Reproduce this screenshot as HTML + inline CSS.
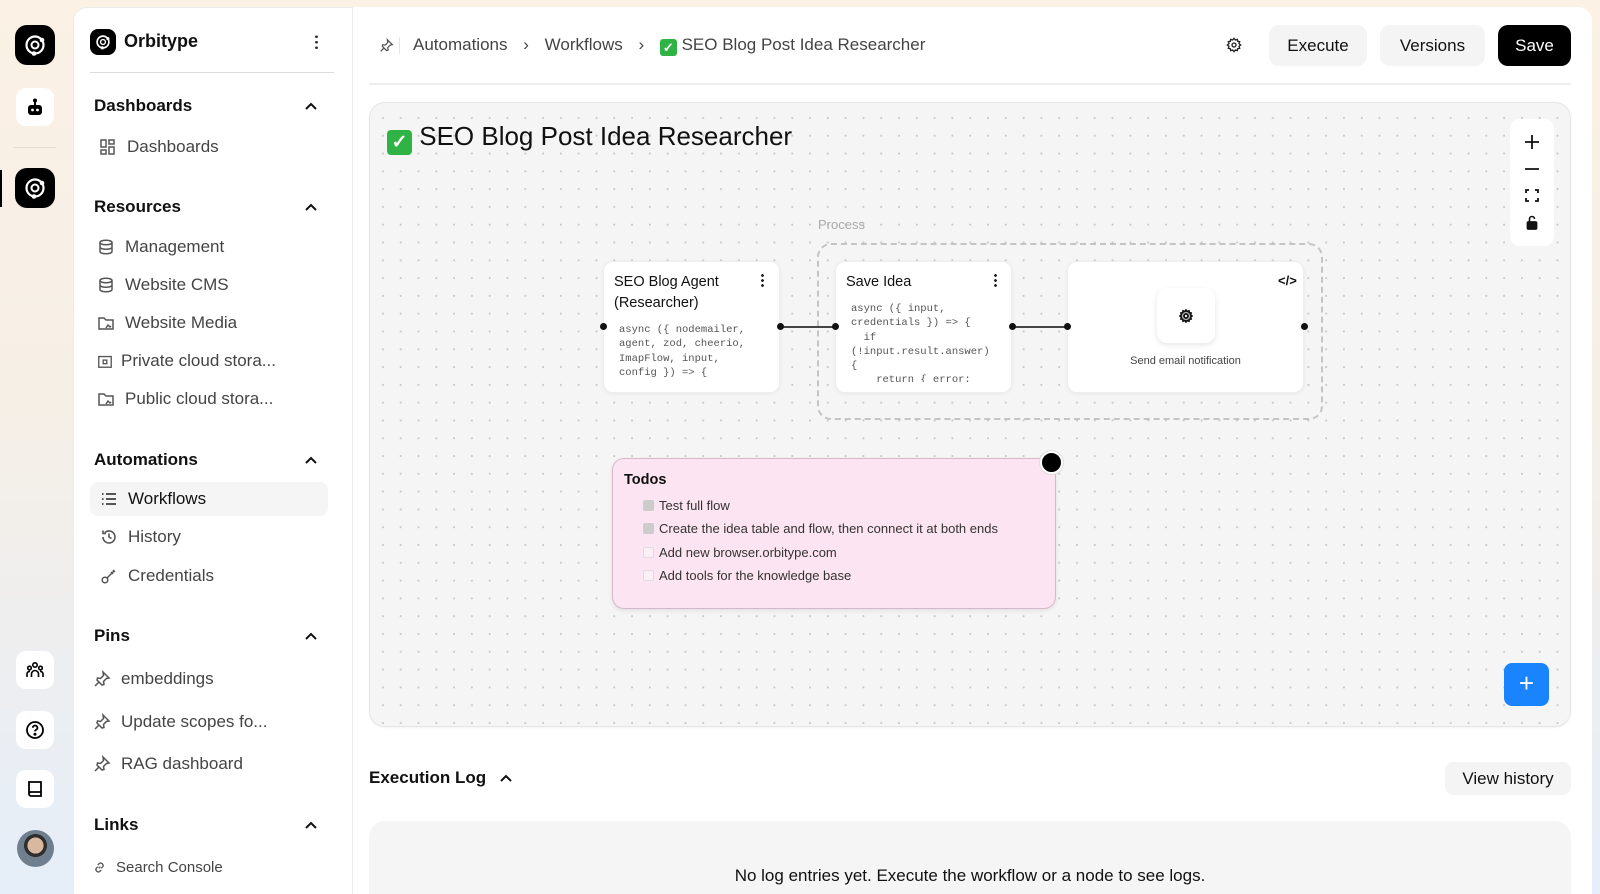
<!DOCTYPE html>
<html style="overflow:hidden;height:894px"><head><meta charset="utf-8"><style>
*{box-sizing:border-box;margin:0;padding:0}
body{width:1600px;height:894px;overflow:hidden;font-family:"Liberation Sans",sans-serif;background:linear-gradient(180deg,#fbf1e5 0%,#f6efe6 45%,#e5eef9 100%);position:relative;color:#111}
.abs{position:absolute}
.rail{position:absolute;left:16px;width:38px;height:38px;border-radius:10px;background:#fff;display:flex;align-items:center;justify-content:center}
.side{position:absolute;left:73px;top:7px;width:290px;height:887px;background:#fff;border-radius:14px 0 0 0;border:1px solid #ececec;border-bottom:none}
.main{position:absolute;left:352px;top:7px;width:1240px;height:887px;background:#fff;border-radius:0 14px 0 0;border-left:1px solid #ececec}
.h{position:absolute;left:94px;font-size:17px;font-weight:bold;color:#111}
.chev{position:absolute;left:304px;width:14px;height:10px}
.it{position:absolute;font-size:17px;color:#444;display:flex;align-items:center;gap:10px;height:24px}
.it svg{width:18px;height:18px}
.btn{position:absolute;top:25px;height:41px;border-radius:10px;background:#f4f4f4;font-size:17px;display:flex;align-items:center;justify-content:center;color:#111}
.node{position:absolute;background:#fff;border-radius:10px;box-shadow:0 1px 3px rgba(0,0,0,.06);border:1px solid #eee}
.code{font-family:"Liberation Mono",monospace;font-size:10.5px;color:#555;line-height:14.3px;white-space:pre}
.dot{position:absolute;width:7px;height:7px;border-radius:50%;background:#111}
.cb{display:inline-block;width:11px;height:11px;border:1px solid #ddd;border-radius:2px;background:#f8f0f4;margin-right:5px;vertical-align:-1px}
.cb.on{background:#ccc;border-color:#ccc}
</style></head><body>
<!-- rail -->
<div class="rail" style="top:25px;width:40px;height:40px;left:15px;background:#000;border-radius:12px"><svg width="26" height="26" viewBox="0 0 26 26"><circle cx="13" cy="13" r="8.5" fill="none" stroke="#fff" stroke-width="2.2"/><circle cx="13" cy="13" r="3.5" fill="none" stroke="#fff" stroke-width="2"/><circle cx="20" cy="8" r="2.3" fill="#fff"/><circle cx="12" cy="21.5" r="2.3" fill="#fff"/></svg></div>
<div class="rail" style="top:88px"><svg width="20" height="20" viewBox="0 0 20 20"><circle cx="10" cy="3.5" r="2" fill="#000"/><rect x="9" y="4" width="2" height="4" fill="#000"/><rect x="3" y="8" width="14" height="10" rx="3" fill="#000"/><circle cx="7.5" cy="13" r="1.4" fill="#fff"/><circle cx="12.5" cy="13" r="1.4" fill="#fff"/></svg></div>
<div class="abs" style="left:14px;top:147px;width:42px;height:1px;background:#e3ddd4"></div>
<div class="abs" style="left:0;top:170px;width:2px;height:37px;background:#000"></div>
<div class="rail" style="top:168px;width:40px;height:40px;left:15px;background:#000;border-radius:12px"><svg width="26" height="26" viewBox="0 0 26 26"><circle cx="13" cy="13" r="8.5" fill="none" stroke="#fff" stroke-width="2.2"/><circle cx="13" cy="13" r="3.5" fill="none" stroke="#fff" stroke-width="2"/><circle cx="20" cy="8" r="2.3" fill="#fff"/><circle cx="12" cy="21.5" r="2.3" fill="#fff"/></svg></div>
<div class="rail" style="top:651px"><svg width="20" height="20" viewBox="0 0 20 20" fill="none" stroke="#000" stroke-width="1.6"><circle cx="10" cy="5" r="2.2"/><circle cx="4.5" cy="8" r="1.8"/><circle cx="15.5" cy="8" r="1.8"/><path d="M6.5 17v-3a3.5 3.5 0 0 1 7 0v3M2 17v-3a2.5 2.5 0 0 1 3-2.5M18 17v-3a2.5 2.5 0 0 0-3-2.5"/></svg></div>
<div class="rail" style="top:711px"><svg width="20" height="20" viewBox="0 0 20 20" fill="none" stroke="#000" stroke-width="1.8"><circle cx="10" cy="10" r="8"/><path d="M7.8 7.8a2.3 2.3 0 1 1 3 2.2c-.6.3-.8.7-.8 1.4"/><circle cx="10" cy="14.3" r=".6" fill="#000"/></svg></div>
<div class="rail" style="top:770px"><svg width="20" height="20" viewBox="0 0 20 20" fill="none" stroke="#000" stroke-width="1.8"><path d="M4 3h12v14H6a2 2 0 0 1-2-2zM4 14.5a2 2 0 0 1 2-1.5h10"/></svg></div>
<div class="abs" style="left:17px;top:830px;width:37px;height:37px;border-radius:50%;background:radial-gradient(circle at 50% 42%,#d9b8a0 0 28%,#2e2e2e 29% 40%,#6f7f8e 41%)"></div>

<!-- sidebar -->
<div class="side"></div>
<div class="abs" style="left:90px;top:29px;width:26px;height:26px;background:#000;border-radius:8px;display:flex;align-items:center;justify-content:center"><svg width="18" height="18" viewBox="0 0 26 26"><circle cx="13" cy="13" r="8.5" fill="none" stroke="#fff" stroke-width="2.4"/><circle cx="13" cy="13" r="3.5" fill="none" stroke="#fff" stroke-width="2"/><circle cx="20" cy="8" r="2.3" fill="#fff"/><circle cx="12" cy="21.5" r="2.3" fill="#fff"/></svg></div>
<div class="abs" style="left:124px;top:31px;font-size:18px;font-weight:bold">Orbitype</div>
<div class="abs" style="left:315px;top:34px;width:3px;height:16px;background:radial-gradient(circle,#333 1.3px,transparent 1.5px) 0 0/3px 5.5px"></div>
<div class="abs" style="left:90px;top:72px;width:244px;height:1px;background:#ddd"></div>

<svg width="0" height="0" style="position:absolute"><defs><symbol id="ch" viewBox="0 0 14 10"><path d="M2 8l5-5 5 5" fill="none" stroke="#111" stroke-width="2"/></symbol><symbol id="db" viewBox="0 0 18 18"><g fill="none" stroke="#555" stroke-width="1.5"><ellipse cx="9" cy="4.5" rx="6" ry="2.3"/><path d="M3 4.5v9c0 1.3 2.7 2.3 6 2.3s6-1 6-2.3v-9M3 9c0 1.3 2.7 2.3 6 2.3s6-1 6-2.3"/></g></symbol><symbol id="fo" viewBox="0 0 18 18"><g fill="none" stroke="#555" stroke-width="1.5"><path d="M2 15V4h5l2 2h7v9z"/><path d="M9 14l2-3 2 2 1-1"/></g></symbol><symbol id="pin" viewBox="0 0 18 18"><g fill="none" stroke="#555" stroke-width="1.5"><path d="M10 2l6 6-2.5.5-3 3 .5 3-2 .5-5-5 .5-2 3 .5 3-3z"/><path d="M6 12l-4 4"/></g></symbol></defs></svg>

<div class="h" style="top:96px">Dashboards</div><svg class="chev" style="top:101px"><use href="#ch"/></svg>
<div class="it" style="left:99px;top:135px"><svg viewBox="0 0 18 18" fill="none" stroke="#555" stroke-width="1.5"><rect x="2" y="2" width="5" height="7"/><rect x="10" y="2" width="5" height="4"/><rect x="2" y="12" width="5" height="4"/><rect x="10" y="9" width="5" height="7"/></svg><span>Dashboards</span></div>
<div class="h" style="top:197px">Resources</div><svg class="chev" style="top:202px"><use href="#ch"/></svg>
<div class="it" style="left:97px;top:235px"><svg><use href="#db"/></svg>Management</div>
<div class="it" style="left:97px;top:273px"><svg><use href="#db"/></svg>Website CMS</div>
<div class="it" style="left:97px;top:311px"><svg><use href="#fo"/></svg>Website Media</div>
<div class="it" style="left:97px;top:349px;gap:8px"><svg style="width:16px;height:16px" viewBox="0 0 18 18" fill="none" stroke="#555" stroke-width="1.5"><rect x="2" y="4" width="14" height="12"/><rect x="7" y="8" width="4" height="4"/></svg>Private cloud stora...</div>
<div class="it" style="left:97px;top:387px"><svg><use href="#fo"/></svg>Public cloud stora...</div>
<div class="h" style="top:450px">Automations</div><svg class="chev" style="top:455px"><use href="#ch"/></svg>
<div class="abs" style="left:90px;top:482px;width:238px;height:34px;background:#f5f5f5;border-radius:8px"></div>
<div class="it" style="left:100px;top:487px;color:#111"><svg viewBox="0 0 18 18" stroke="#222" stroke-width="1.6"><path d="M6 4h10M6 9h10M6 14h10M2 4h1.5M2 9h1.5M2 14h1.5"/></svg>Workflows</div>
<div class="it" style="left:100px;top:525px"><svg viewBox="0 0 18 18" fill="none" stroke="#555" stroke-width="1.6"><path d="M3 9a6 6 0 1 0 1.8-4.3M3 2.5v3h3M9 5.5V9l2.5 1.5"/></svg>History</div>
<div class="it" style="left:100px;top:564px"><svg viewBox="0 0 18 18" fill="none" stroke="#555" stroke-width="1.5"><circle cx="5" cy="13" r="2.8"/><path d="M7 11l7-7M11 5l2 2M13 3l2 2"/></svg>Credentials</div>
<div class="h" style="top:626px">Pins</div><svg class="chev" style="top:631px"><use href="#ch"/></svg>
<div class="it" style="left:93px;top:667px"><svg><use href="#pin"/></svg>embeddings</div>
<div class="it" style="left:93px;top:710px"><svg><use href="#pin"/></svg>Update scopes fo...</div>
<div class="it" style="left:93px;top:752px"><svg><use href="#pin"/></svg>RAG dashboard</div>
<div class="h" style="top:815px">Links</div><svg class="chev" style="top:820px"><use href="#ch"/></svg>
<div class="it" style="left:92px;top:855px;font-size:15px;gap:9px"><svg style="width:15px;height:15px" viewBox="0 0 18 18" fill="none" stroke="#555" stroke-width="1.6"><path d="M8 10l2-2M7 6l2-2a3 3 0 0 1 4 4l-2 2M11 12l-2 2a3 3 0 0 1-4-4l2-2"/></svg>Search Console</div>

<!-- main -->
<div class="main"></div>
<svg class="abs" style="left:379px;top:38px" width="15" height="15"><use href="#pin"/></svg>
<div class="abs" style="left:399px;top:37px;width:1px;height:17px;background:#dde6f3"></div>
<div class="abs" style="left:413px;top:35px;font-size:17px;color:#444;white-space:nowrap">Automations <span style="margin:0 11px;font-size:17px">›</span> Workflows <span style="margin:0 11px;font-size:17px">›</span> <span style="display:inline-block;width:17px;height:17px;background:#2fb344;border-radius:3px;color:#fff;font-size:13px;text-align:center;line-height:17px;vertical-align:-2px;font-weight:bold">✓</span> SEO Blog Post Idea Researcher</div>
<svg class="abs" style="left:1226px;top:37px" width="16" height="16" viewBox="0 0 24 24" fill="none" stroke="#222" stroke-width="2"><circle cx="12" cy="12" r="3"/><path d="M12 2l2 2.5 3-1 .5 3 3 .5-1 3L22 12l-2.5 2 1 3-3 .5-.5 3-3-1L12 22l-2-2.5-3 1-.5-3-3-.5 1-3L2 12l2.5-2-1-3 3-.5.5-3 3 1z"/></svg>
<div class="btn" style="left:1269px;width:98px">Execute</div>
<div class="btn" style="left:1380px;width:105px">Versions</div>
<div class="btn" style="left:1498px;width:73px;background:#000;color:#fff">Save</div>
<div class="abs" style="left:369px;top:83px;width:1202px;height:2px;background:#eee"></div>

<!-- canvas -->
<div class="abs" style="left:369px;top:102px;width:1202px;height:625px;background-color:#f5f5f5;background-image:radial-gradient(circle,#c8c8c8 0.9px,transparent 1.2px);background-size:17.8px 17.8px;background-position:4px 6px;border:1px solid #e6e6e6;border-radius:16px;box-shadow:0 1px 2px rgba(0,0,0,.05)"></div>
<div class="abs" style="left:387px;top:121px;font-size:26px;white-space:nowrap;color:#111"><span style="display:inline-block;width:25px;height:25px;background:#2fb344;border-radius:4px;color:#fff;font-size:19px;text-align:center;line-height:25px;vertical-align:-3px;font-weight:bold">✓</span> SEO Blog Post Idea Researcher</div>
<div class="abs" style="left:1510px;top:119px;width:44px;height:127px;background:#fff;border-radius:10px"></div>
<svg class="abs" style="left:1522px;top:133px" width="20" height="110" viewBox="0 0 20 110" fill="none" stroke="#111" stroke-width="1.8"><path d="M10 2v14M3 9h14M3 36h14"/><path d="M4 60v-3h3M13 57h3v3M16 65v3h-3M7 68H4v-3"/><rect x="5.5" y="89" width="9" height="7" fill="#111" rx="1"/><path d="M7.5 89v-3a2.5 2.5 0 0 1 5 0" stroke-width="1.6"/></svg>

<div class="abs" style="left:818px;top:217px;font-size:13px;color:#aaa">Process</div>
<div class="abs" style="left:817px;top:243px;width:506px;height:177px;border:2px dashed #c4c4c4;border-radius:14px"></div>

<div class="node" style="left:603px;top:261px;width:177px;height:132px"></div>
<div class="abs" style="left:614px;top:272px;font-size:14.5px;line-height:21px;color:#111">SEO Blog Agent<br>(Researcher)</div>
<div class="abs" style="left:761px;top:273px;width:3px;height:14px;background:radial-gradient(circle,#222 1.3px,transparent 1.5px) 0 0/3px 5px"></div>
<div class="abs code" style="left:619px;top:323px">async ({ nodemailer,
agent, zod, cheerio,
ImapFlow, input,
config }) => {</div>

<div class="node" style="left:835px;top:261px;width:177px;height:132px"></div>
<div class="abs" style="left:846px;top:274px;font-size:14.5px;color:#111">Save Idea</div>
<div class="abs" style="left:994px;top:273px;width:3px;height:14px;background:radial-gradient(circle,#222 1.3px,transparent 1.5px) 0 0/3px 5px"></div>
<div class="abs code" style="left:851px;top:302px;height:80px;overflow:hidden">async ({ input,
credentials }) => {
  if
(!input.result.answer)
{
    return { error:</div>

<div class="node" style="left:1067px;top:261px;width:237px;height:132px"></div>
<div class="abs" style="left:1278px;top:273px;font-size:13px;font-weight:bold;color:#111">&lt;/&gt;</div>
<div class="abs" style="left:1157px;top:288px;width:58px;height:55px;background:#fff;border-radius:10px;box-shadow:0 2px 6px rgba(0,0,0,.1);display:flex;align-items:center;justify-content:center"><svg width="14" height="14" viewBox="0 0 24 24" fill="none" stroke="#111" stroke-width="3.2"><circle cx="12" cy="12" r="3.5"/><path d="M12 2l2 2.5 3-1 .5 3 3 .5-1 3L22 12l-2.5 2 1 3-3 .5-.5 3-3-1L12 22l-2-2.5-3 1-.5-3-3-.5 1-3L2 12l2.5-2-1-3 3-.5.5-3 3 1z"/></svg></div>
<div class="abs" style="left:1067px;top:355px;width:237px;text-align:center;font-size:11px;color:#444">Send email notification</div>

<div class="abs" style="left:783px;top:326px;width:52px;height:2px;background:#444"></div>
<div class="abs" style="left:1015px;top:326px;width:52px;height:2px;background:#444"></div>
<div class="dot" style="left:600px;top:323px"></div>
<div class="dot" style="left:777px;top:323px"></div>
<div class="dot" style="left:832px;top:323px"></div>
<div class="dot" style="left:1009px;top:323px"></div>
<div class="dot" style="left:1064px;top:323px"></div>
<div class="dot" style="left:1301px;top:323px"></div>

<div class="abs" style="left:612px;top:458px;width:444px;height:151px;background:#fce4f2;border:1.5px solid #d7b8ca;border-radius:12px;box-shadow:0 2px 5px rgba(0,0,0,.08)"></div>
<div class="abs" style="left:624px;top:472px;font-size:14.5px;font-weight:bold">Todos</div>
<div class="abs" style="left:643px;top:494px;font-size:13px;color:#333;line-height:23.3px;white-space:nowrap">
<div><span class="cb on"></span>Test full flow</div>
<div><span class="cb on"></span>Create the idea table and flow, then connect it at both ends</div>
<div><span class="cb"></span>Add new browser.orbitype.com</div>
<div><span class="cb"></span>Add tools for the knowledge base</div></div>
<div class="abs" style="left:1040px;top:451px;width:23px;height:23px;border-radius:50%;background:#000;border:2.5px solid #fff;box-shadow:0 0 0 1px #ddd"></div>

<div class="abs" style="left:1504px;top:663px;width:45px;height:43px;background:#1a84ff;border-radius:8px;color:#fff;font-size:26px;text-align:center;line-height:41px">+</div>

<div class="abs" style="left:369px;top:768px;font-size:17px;font-weight:bold">Execution Log</div>
<svg class="abs" style="left:499px;top:773px" width="14" height="10"><use href="#ch"/></svg>
<div class="btn" style="left:1445px;top:762px;width:126px;height:33px;border-radius:8px">View history</div>
<div class="abs" style="left:369px;top:821px;width:1202px;height:73px;background:#f5f5f5;border-radius:16px 16px 0 0"></div>
<div class="abs" style="left:369px;top:866px;width:1202px;text-align:center;font-size:17px;color:#111">No log entries yet. Execute the workflow or a node to see logs.</div>
</body></html>
